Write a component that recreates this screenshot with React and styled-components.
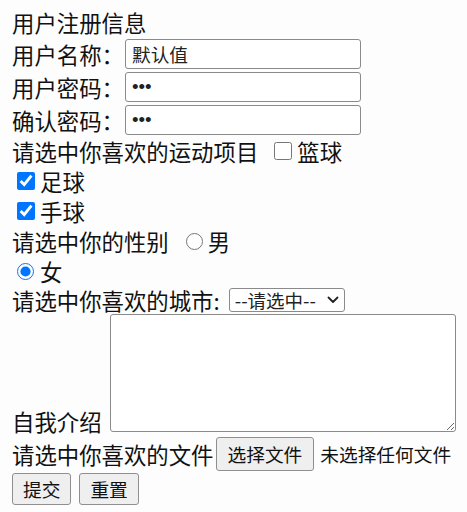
import React from "react";
import styled, { createGlobalStyle } from "styled-components";

const Global = createGlobalStyle`
  html, body { margin: 0; padding: 0; background: #fdfdfd; }
  body {
    font-family: "Noto Sans CJK SC", "Noto Sans", sans-serif;
    font-size: 22.4px;
    color: #111;
  }
`;

const Form = styled.form`
  display: flex;
  flex-direction: column;
  padding: 7px 0 0 12px;
`;

const Line = styled.div`
  display: flex;
  align-items: ${(p) => p.$align || "center"};
  height: ${(p) => p.$h || 30}px;
  line-height: 30px;
  white-space: nowrap;
`;

const Label = styled.span`
  line-height: 30px;
`;

const TextInput = styled.input`
  box-sizing: border-box;
  width: 236px;
  height: 30px;
  margin: 0 0 0 1px;
  padding: 0 6px;
  border: 1px solid #8a8a8a;
  border-radius: 3px;
  background: #fff;
  font-family: ${(p) => (p.type === "password" ? '"Liberation Sans", Arial, sans-serif' : '"Noto Sans CJK SC", sans-serif')};
  font-size: 18.7px;
  color: #222;
  outline: none;
`;

const Check = styled.input`
  width: ${(p) => p.$size || 18}px;
  height: ${(p) => p.$size || 18}px;
  margin: 0 ${(p) => p.$mr || 5}px 0 ${(p) => p.$ml || 5}px;
  accent-color: #0075ff;
`;

const SelectBox = styled.div`
  box-sizing: border-box;
  display: flex;
  align-items: center;
  width: 116px;
  height: 24px;
  margin-left: 9px;
  border: 1px solid #8a8a8a;
  border-radius: 3px;
  background: #fff;
  padding-right: 5px;
`;

const Select = styled.select`
  appearance: none;
  flex: 1;
  min-width: 0;
  height: 100%;
  border: none;
  background: transparent;
  padding: 0 0 0 5px;
  font-family: "Noto Sans CJK SC", sans-serif;
  font-size: 18.5px;
  line-height: 22px;
  color: #222;
  outline: none;
`;

const TextArea = styled.textarea`
  box-sizing: border-box;
  width: 346px;
  height: 118px;
  margin: 0 0 4px 8px;
  border: 1px solid #8a8a8a;
  border-radius: 3px;
  background: #fff;
  font-family: "Noto Sans CJK SC", sans-serif;
  font-size: 18.7px;
`;

const Button = styled.button`
  box-sizing: border-box;
  height: ${(p) => p.$h || 32}px;
  padding: 0 ${(p) => p.$px || 10}px;
  margin: 0 0 0 ${(p) => p.$ml || 0}px;
  border: 1px solid #8f8f8f;
  border-radius: 3px;
  background: #efefef;
  font-family: "Noto Sans CJK SC", sans-serif;
  font-size: 18.7px;
  color: #111;
  line-height: 1;
`;

const FileNote = styled.span`
  margin-left: 6px;
  font-size: 18.7px;
`;

const ButtonRow = styled.div`
  display: flex;
  gap: 8px;
  padding-top: 1px;
`;

function Chevron() {
  return (
    <svg width="12" height="8" viewBox="0 0 12 8" style={{ pointerEvents: "none" }}>
      <path d="M1.5 1.5 L6 6 L10.5 1.5" fill="none" stroke="#222" strokeWidth="1.8" strokeLinecap="round" strokeLinejoin="round" />
    </svg>
  );
}

export default function App() {
  return (
    <>
      <Global />
      <Form onSubmit={(e) => e.preventDefault()}>
        <Line>用户注册信息</Line>
        <Line $h={33}>
          <Label>用户名称：</Label>
          <TextInput type="text" defaultValue="默认值" />
        </Line>
        <Line $h={33}>
          <Label>用户密码：</Label>
          <TextInput type="password" defaultValue="123" />
        </Line>
        <Line $h={33}>
          <Label>确认密码：</Label>
          <TextInput type="password" defaultValue="123" />
        </Line>
        <Line>
          <Label>请选中你喜欢的运动项目</Label>
          <Check type="checkbox" $ml={16} />
          <Label>篮球</Label>
        </Line>
        <Line>
          <Check type="checkbox" defaultChecked />
          <Label>足球</Label>
        </Line>
        <Line>
          <Check type="checkbox" defaultChecked />
          <Label>手球</Label>
        </Line>
        <Line>
          <Label>请选中你的性别</Label>
          <Check type="radio" name="sex" $size={17} $ml={17} $mr={5} />
          <Label>男</Label>
        </Line>
        <Line>
          <Check type="radio" name="sex" $size={17} $mr={6} defaultChecked />
          <Label>女</Label>
        </Line>
        <Line $h={28}>
          <Label>请选中你喜欢的城市:</Label>
          <SelectBox>
            <Select defaultValue="">
              <option value="">--请选中--</option>
              <option value="bj">北京</option>
              <option value="sh">上海</option>
            </Select>
            <Chevron />
          </SelectBox>
        </Line>
        <Line $h={122} $align="flex-end">
          <Label>自我介绍</Label>
          <TextArea />
        </Line>
        <Line $h={36}>
          <Label>请选中你喜欢的文件</Label>
          <Button type="button" $h={34} $px={11} $ml={2}>选择文件</Button>
          <FileNote>未选择任何文件</FileNote>
        </Line>
        <ButtonRow>
          <Button type="submit">提交</Button>
          <Button type="reset">重置</Button>
        </ButtonRow>
      </Form>
    </>
  );
}
